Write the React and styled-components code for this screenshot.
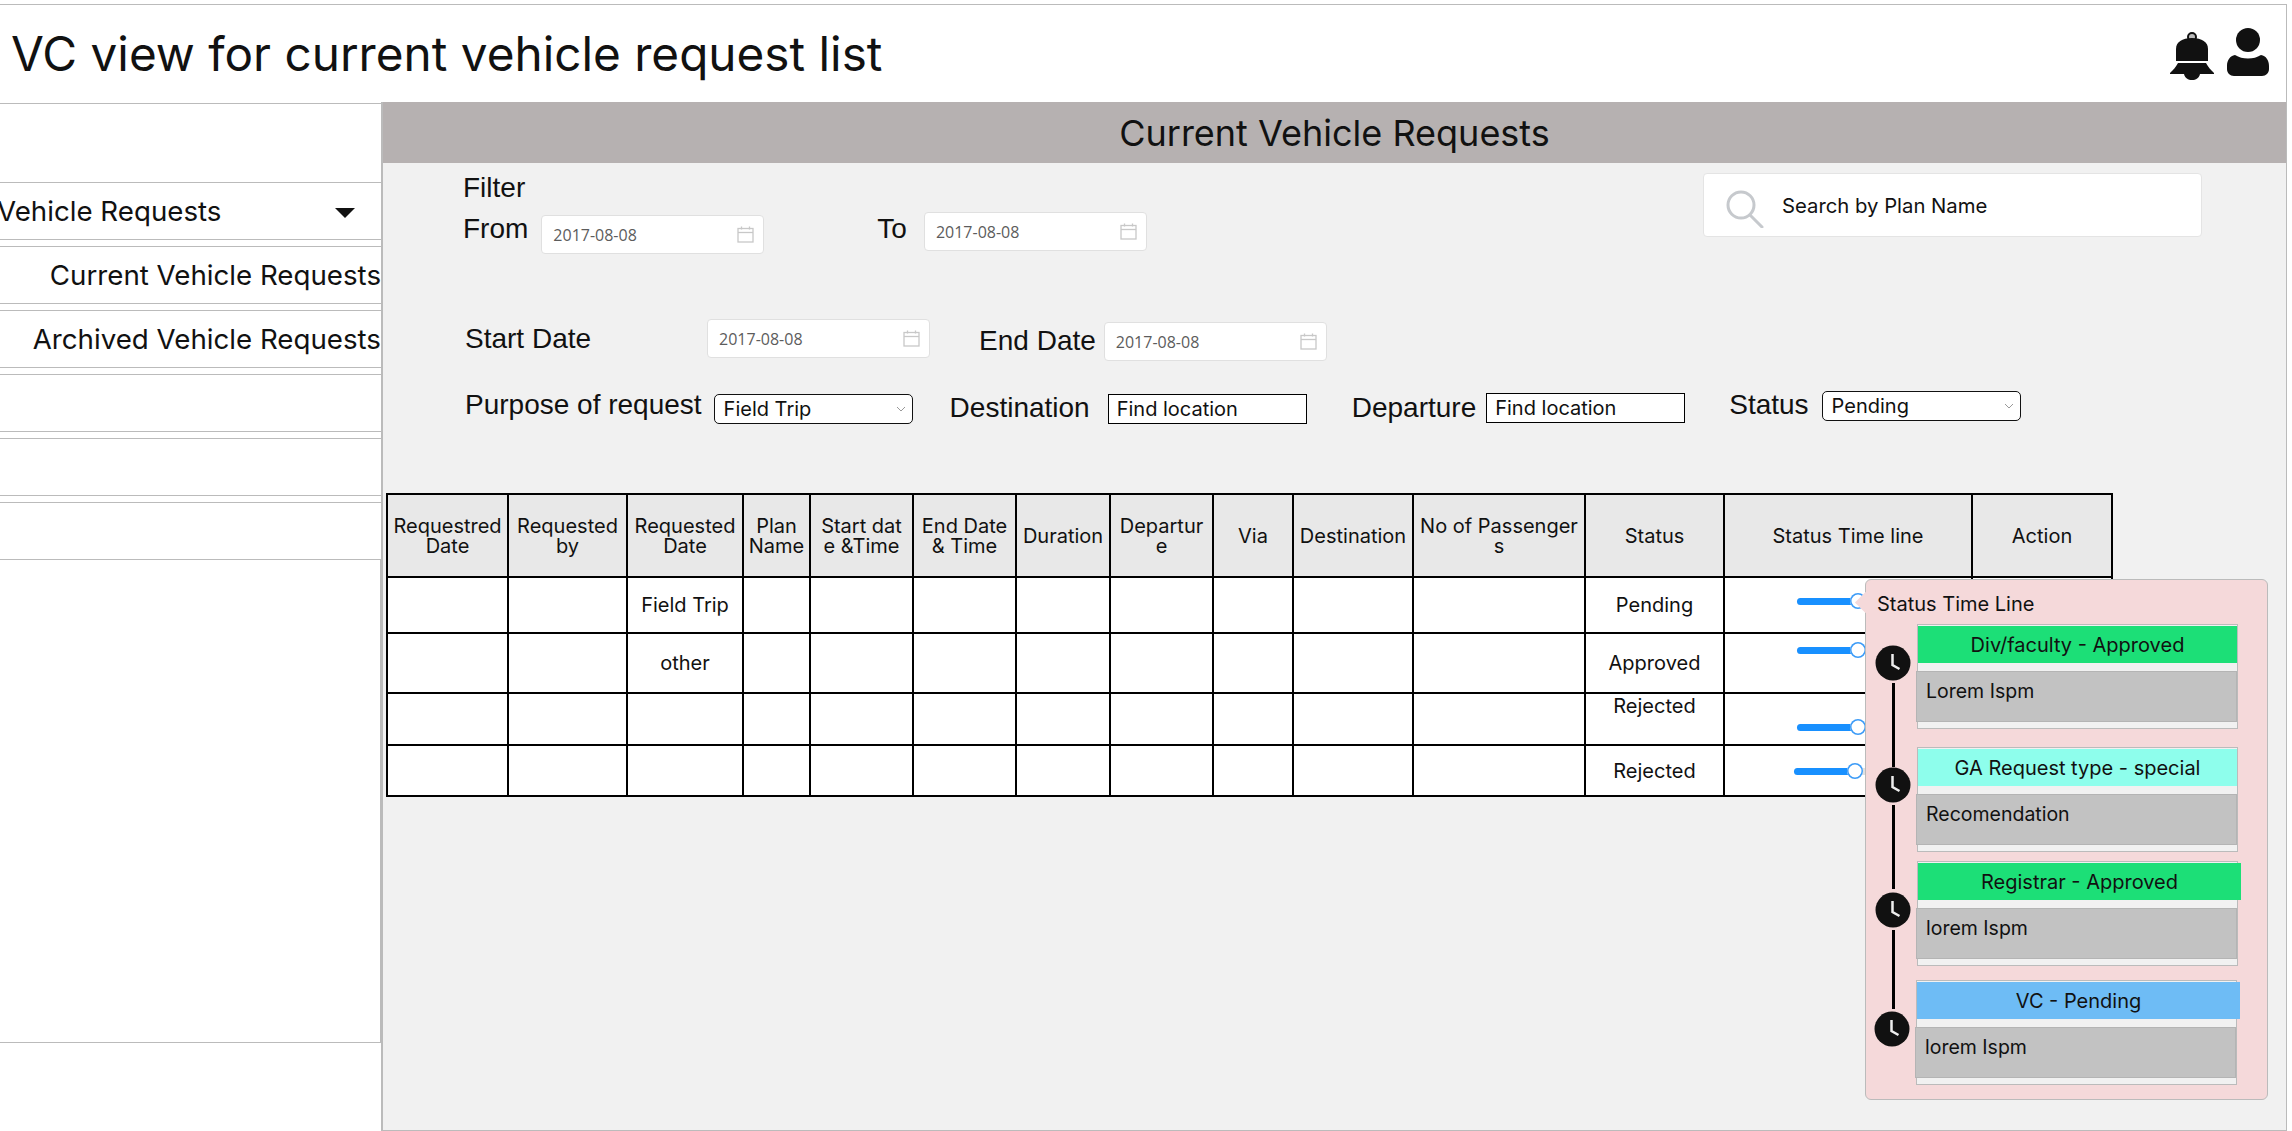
import React from 'react';
import styled, { createGlobalStyle } from 'styled-components';

const GlobalStyle = createGlobalStyle`
  html, body {
    margin: 0;
    padding: 0;
    background: #fff;
    overflow: hidden;
  }
  * {
    box-sizing: border-box;
  }
`;

const Page = styled.div`
  width: 2292px;
  height: 1131px;
  padding-top: 4px;
  padding-right: 5px;
  overflow: hidden;
  font-family: Inter, 'Liberation Sans', sans-serif;
  color: #111;
  background: #fff;
`;

const Header = styled.header`
  height: 98px;
  border-top: 1px solid #bbb;
  border-right: 1px solid #bbb;
  display: flex;
  align-items: center;
  justify-content: space-between;
  padding: 0 17px 0 11px;
`;

const Title = styled.h1`
  margin: 0;
  font-size: 47.7px;
  font-weight: 400;
  line-height: 58px;
`;

const HeaderIcons = styled.div`
  display: flex;
  align-items: flex-start;
  gap: 13px;
`;

const Body = styled.div`
  display: flex;
  height: 1029px;
`;

const Sidebar = styled.aside`
  width: 381px;
  flex-shrink: 0;
  padding-top: 78px;
  border-top: 1px solid #bbb;
  margin-top: 1px;
`;

const NavRow = styled.div`
  height: 58px;
  margin-bottom: 6px;
  border-top: 1px solid #bbb;
  border-bottom: 1px solid #bbb;
  display: flex;
  align-items: center;
  justify-content: flex-end;
  white-space: nowrap;
  font-size: 27.7px;
  overflow: hidden;
`;

const NavMain = styled(NavRow)`
  justify-content: space-between;
  padding-right: 26px;
`;

const NavLabel = styled.span`
  margin-left: -3px;
`;

const Caret = styled.span`
  width: 0;
  height: 0;
  margin-top: 4px;
  border-left: 10px solid transparent;
  border-right: 10px solid transparent;
  border-top: 10px solid #111;
`;

const SideBox = styled.div`
  height: 484px;
  margin-top: -7px;
  border-bottom: 1px solid #bbb;
  border-right: 1px solid #bbb;
`;

const Main = styled.main`
  position: relative;
  flex: 1;
  background: #f1f1f1;
  border-left: 2px solid #bbb;
  border-right: 1px solid #bbb;
  border-bottom: 1px solid #bbb;
`;

const Band = styled.div`
  height: 61px;
  background: #b6b1b1;
  display: flex;
  align-items: center;
  justify-content: center;
  font-size: 36px;
`;

const Label = styled.span`
  font-family: 'Liberation Sans', sans-serif;
  font-size: 28px;
  line-height: 32px;
  white-space: nowrap;
  margin-left: ${(p) => p.$left || 0}px;
  margin-top: ${(p) => p.$top || 0}px;
`;

const FilterTop = styled.div`
  display: flex;
  justify-content: space-between;
  padding: 9px 84px 0 80px;
`;

const FilterLeft = styled.div`
  display: flex;
  flex-direction: column;
`;

const Row = styled.div`
  display: flex;
  align-items: flex-start;
  margin-top: ${(p) => p.$top || 0}px;
  padding-left: ${(p) => p.$left || 0}px;
`;

const DateBox = styled.div`
  width: 223px;
  height: 39px;
  flex-shrink: 0;
  margin-left: ${(p) => p.$left || 0}px;
  margin-top: ${(p) => p.$top || 0}px;
  padding: 0 9px 0 11px;
  display: flex;
  align-items: center;
  justify-content: space-between;
  background: #fff;
  border: 1px solid #e0e0e0;
  border-radius: 4px;
  font-family: 'Open Sans', sans-serif;
  font-size: 16px;
  color: #5c5c5c;
`;

const SearchBox = styled.div`
  width: 499px;
  height: 64px;
  margin-top: 1px;
  padding-left: 22px;
  display: flex;
  align-items: center;
  gap: 18px;
  background: #fff;
  border: 1px solid #e4e4e4;
  border-radius: 4px;
  font-size: 20.3px;
`;

const SelectBox = styled.div`
  width: 199px;
  height: 30px;
  flex-shrink: 0;
  margin-left: ${(p) => p.$left || 0}px;
  margin-top: ${(p) => p.$top || 0}px;
  padding: 0 6px 0 9px;
  display: flex;
  align-items: center;
  justify-content: space-between;
  background: #fff;
  border: 1px solid #111;
  border-radius: 5px;
  font-size: 20px;
`;

const TextBox = styled.div`
  width: 199px;
  height: 30px;
  flex-shrink: 0;
  margin-left: ${(p) => p.$left || 0}px;
  margin-top: ${(p) => p.$top || 0}px;
  padding-left: 8px;
  display: flex;
  align-items: center;
  background: #fff;
  border: 1px solid #000;
  font-size: 20px;
`;

const Table = styled.table`
  margin: 69px 0 0 3px;
  width: 1725px;
  table-layout: fixed;
  border-collapse: collapse;
  border: 2px solid #000;
  background: #fff;
  font-size: 20px;
  text-align: center;
`;

const Th = styled.th`
  height: 83px;
  padding: 0;
  font-weight: 400;
  line-height: 20px;
  white-space: pre-line;
  background: #e8e8e8;
  border: 2px solid #000;
`;

const Td = styled.td`
  height: ${(p) => p.$height}px;
  padding: 0;
  border: 2px solid #000;
  vertical-align: ${(p) => (p.$alignTop ? 'top' : 'middle')};
`;

const Slider = styled.div`
  position: relative;
  width: 120px;
  height: 7px;
  margin-left: ${(p) => p.$left}px;
  margin-top: ${(p) => p.$top}px;
  background: #e1e1e1;
  border-radius: 4px;
`;

const SliderFill = styled.div`
  width: 62px;
  height: 7px;
  background: #1890ff;
  border-radius: 4px;
`;

const SliderHandle = styled.div`
  position: absolute;
  left: 53px;
  top: -5px;
  width: 16px;
  height: 16px;
  background: #fff;
  box-shadow: inset 0 0 0 1.5px #3c9bf7;
  border-radius: 50%;
`;

const Popover = styled.div`
  position: absolute;
  left: 1482px;
  top: 477px;
  width: 403px;
  height: 521px;
  padding: 13px 0 0 11px;
  background: #f5d9da;
  border: 1px solid #bbb;
  border-radius: 6px;
  font-size: 20px;

  &::before {
    content: '';
    position: absolute;
    left: -8px;
    top: 15px;
    width: 15px;
    height: 15px;
    background: #f5d9da;
    transform: rotate(45deg);
  }
`;

const PopTitle = styled.div`
  position: relative;
  line-height: 23px;
  margin-bottom: 8px;
`;

const TimelineRow = styled.div`
  display: flex;
  margin-top: ${(p) => p.$top || 0}px;
`;

const Rail = styled.div`
  width: 40px;
  flex-shrink: 0;
  display: flex;
  flex-direction: column;
  align-items: center;
  height: 105px;
  position: relative;
  left: ${(p) => p.$left || 0}px;
  padding-top: ${(p) => p.$top}px;
  padding-right: 8px;
`;

const Connector = styled.div`
  width: 3px;
  flex-shrink: 0;
  height: ${(p) => p.$length}px;
  margin-top: 2px;
  background: #000;
`;

const Card = styled.div`
  width: 321px;
  height: 105px;
  flex-shrink: 0;
  margin-left: ${(p) => p.$left || 0}px;
  padding-top: 1px;
  background: #f1f1f1;
  border: 1px solid #bbb;
`;

const CardHead = styled.div`
  height: 37px;
  width: ${(p) => (p.$wide ? 'calc(100% + 4px)' : '100%')};
  display: flex;
  align-items: center;
  justify-content: center;
  background: ${(p) => p.$color};
`;

const CardBody = styled.div`
  height: 51px;
  margin: 8px 0 0 -2px;
  padding: 6px 0 0 9px;
  font-size: 19.5px;
  line-height: 26px;
  background: #c2c2c2;
  border: 1px solid #b4b4b4;
`;

const SearchSvg = styled.svg`
  flex-shrink: 0;
  margin-top: 8px;
`;

const ClockSvg = styled.svg`
  flex-shrink: 0;
`;

const BellSvg = styled.svg`
  margin-top: 4px;
`;

const CalendarIcon = () => (
  <svg width="17" height="17" viewBox="0 0 17 17" fill="none" stroke="#c8c8c8" strokeWidth="1.3">
    <rect x="1" y="2.500" width="15" height="13.500" />
    <path d="M1 6.500h15" />
    <path d="M4.500 .5v3M12.500 .5v3" />
  </svg>
);

const Chevron = () => (
  <svg width="10" height="7" viewBox="0 0 10 7" fill="none" stroke="#999" strokeWidth="1">
    <path d="M1 1l4 4 4-4" />
  </svg>
);

const SearchIcon = () => (
  <SearchSvg width="38" height="38" viewBox="0 0 38 38" fill="none" stroke="#c6c9cd" strokeWidth="3">
    <circle cx="15" cy="15" r="13" />
    <path d="M24 25l12 12" strokeLinecap="round" />
  </SearchSvg>
);

const BellIcon = () => (
  <BellSvg width="44" height="48" viewBox="0 0 44 48">
    <circle cx="22" cy="5" r="4" fill="#bbb" stroke="#111" strokeWidth="2" />
    <path fill="#111" d="M6 29V17C6 10 12 6 22 6s16 4 16 11v12z" />
    <path fill="#111" d="M8 31h28c2 4 5 7 8 10v1H0v-1c3-3 6-6 8-10z" />
    <path fill="#111" d="M14 42h16c-1 4-4 6-8 6s-7-2-8-6z" />
  </BellSvg>
);

const UserIcon = () => (
  <svg width="42" height="48" viewBox="0 0 42 48">
    <circle cx="21" cy="12" r="12" fill="#111" />
    <path fill="#111" d="M8 27c4 2.500 8 3.500 13 3.500S30 29.500 34 27c5 1 8 5 8 11v3c0 4-3 7-7 7H7c-4 0-7-3-7-7v-3c0-6 3-10 8-11z" />
  </svg>
);

const ClockIcon = () => (
  <ClockSvg width="36" height="36" viewBox="0 0 36 36">
    <circle cx="18" cy="18" r="17.500" fill="#111" />
    <path d="M17.500 9v11l7 4" fill="none" stroke="#eee" strokeWidth="2.500" />
  </ClockSvg>
);

const columns = [
  { label: 'Requestred\nDate', width: 121 },
  { label: 'Requested\nby', width: 119 },
  { label: 'Requested\nDate', width: 116 },
  { label: 'Plan\nName', width: 67 },
  { label: 'Start dat\ne &Time', width: 103 },
  { label: 'End Date\n& Time', width: 103 },
  { label: 'Duration', width: 94 },
  { label: 'Departur\ne', width: 103 },
  { label: 'Via', width: 80 },
  { label: 'Destination', width: 120 },
  { label: 'No of Passenger\ns', width: 172 },
  { label: 'Status', width: 139 },
  { label: 'Status Time line', width: 248 },
  { label: 'Action', width: 140 },
];

const rows = [
  { height: 56, purpose: 'Field Trip', status: 'Pending', sliderTop: 20, sliderLeft: 72 },
  { height: 60, purpose: 'other', status: 'Approved', sliderTop: 13, sliderLeft: 72 },
  { height: 52, purpose: '', status: 'Rejected', statusTop: true, sliderTop: 30, sliderLeft: 72 },
  { height: 51, purpose: '', status: 'Rejected', sliderTop: 22, sliderLeft: 69 },
];

const steps = [
  { head: 'Div/faculty - Approved', color: '#1cdf77', body: 'Lorem Ispm', railTop: 21, line: 84 },
  { head: 'GA Request type - special', color: '#8efeec', body: 'Recomendation', railTop: 20, line: 84, top: 18 },
  { head: 'Registrar - Approved', color: '#1cdf77', body: 'lorem Ispm', railTop: 31, line: 79, top: 9, wide: true },
  { head: 'VC - Pending', color: '#6ebcf5', body: 'lorem Ispm', railTop: 31, top: 14, wide: true, shift: -1 },
];

const DateField = ({ left, top }) => (
  <DateBox $left={left} $top={top}>
    2017-08-08
    <CalendarIcon />
  </DateBox>
);

const App = () => {
  return (
    <Page>
      <GlobalStyle />
      <Header>
        <Title>VC view for current vehicle request list</Title>
        <HeaderIcons>
          <BellIcon />
          <UserIcon />
        </HeaderIcons>
      </Header>
      <Body>
        <Sidebar>
          <NavMain>
            <NavLabel>Vehicle Requests</NavLabel>
            <Caret />
          </NavMain>
          <NavRow>Current Vehicle Requests</NavRow>
          <NavRow>Archived Vehicle Requests</NavRow>
          <NavRow />
          <NavRow />
          <NavRow />
          <SideBox />
        </Sidebar>
        <Main>
          <Band>Current Vehicle Requests</Band>
          <FilterTop>
            <FilterLeft>
              <Label>Filter</Label>
              <Row $top={9}>
                <Label>From</Label>
                <DateField left={13} top={2} />
                <Label $left={113}>To</Label>
                <DateField left={17} top={-1} />
              </Row>
            </FilterLeft>
            <SearchBox>
              <SearchIcon />
              Search by Plan Name
            </SearchBox>
          </FilterTop>
          <Row $top={65} $left={82}>
            <Label $top={4}>Start Date</Label>
            <DateField left={116} />
            <Label $left={49} $top={6}>End Date</Label>
            <DateField left={8} top={3} />
          </Row>
          <Row $top={28} $left={82}>
            <Label>Purpose of request</Label>
            <SelectBox $left={12} $top={5}>
              Field Trip
              <Chevron />
            </SelectBox>
            <Label $left={37} $top={3}>Destination</Label>
            <TextBox $left={18} $top={5}>Find location</TextBox>
            <Label $left={45} $top={3}>Departure</Label>
            <TextBox $left={10} $top={4}>Find location</TextBox>
            <Label $left={44}>Status</Label>
            <SelectBox $left={13} $top={2}>
              Pending
              <Chevron />
            </SelectBox>
          </Row>
          <Table>
            <colgroup>
              {columns.map((col) => (
                <col key={col.label} style={{ width: col.width }} />
              ))}
            </colgroup>
            <thead>
              <tr>
                {columns.map((col) => (
                  <Th key={col.label}>{col.label}</Th>
                ))}
              </tr>
            </thead>
            <tbody>
              {rows.map((row, i) => (
                <tr key={i}>
                  <Td $height={row.height} />
                  <Td />
                  <Td>{row.purpose}</Td>
                  {Array.from({ length: 8 }).map((_, j) => (
                    <Td key={j} />
                  ))}
                  <Td $alignTop={row.statusTop}>{row.status}</Td>
                  <Td $alignTop>
                    <Slider $left={row.sliderLeft} $top={row.sliderTop}>
                      <SliderFill />
                      <SliderHandle />
                    </Slider>
                  </Td>
                  <Td />
                </tr>
              ))}
            </tbody>
          </Table>
          <Popover>
            <PopTitle>Status Time Line</PopTitle>
            {steps.map((step) => (
              <TimelineRow key={step.head} $top={step.top}>
                <Rail $top={step.railTop} $left={step.shift}>
                  <ClockIcon />
                  {step.line && <Connector $length={step.line} />}
                </Rail>
                <Card $left={step.shift}>
                  <CardHead $color={step.color} $wide={step.wide}>{step.head}</CardHead>
                  <CardBody>{step.body}</CardBody>
                </Card>
              </TimelineRow>
            ))}
          </Popover>
        </Main>
      </Body>
    </Page>
  );
};

export default App;
